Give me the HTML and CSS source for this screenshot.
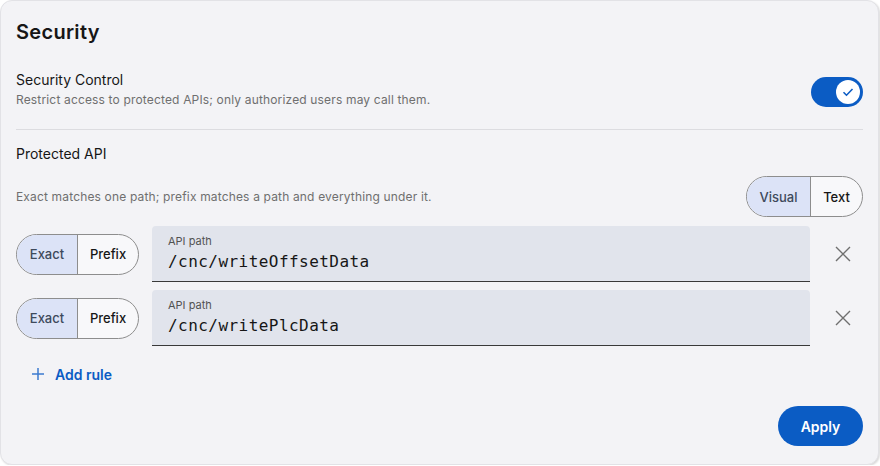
FILE: index.html
```html
<!DOCTYPE html>
<html lang="en">
<head>
    <meta charset="UTF-8">
    <meta name="viewport" content="width=device-width, initial-scale=1.0">
    <title>Security</title>
    <link rel="stylesheet" href="styles.css">
</head>
<body>
    <div class="card">
        <h1 class="title">Security</h1>

        <div class="setting-row">
            <div class="setting-text">
                <div class="label">Security Control</div>
                <div class="hint">Restrict access to protected APIs; only authorized users may call them.</div>
            </div>
            <button class="toggle on" aria-label="Security Control">
                <span class="knob">
                    <svg width="14" height="14" viewBox="0 0 14 14"><path d="M2.5 7.2l3 3 6-6.2" fill="none" stroke="#0b5cc4" stroke-width="1.6"/></svg>
                </span>
            </button>
        </div>

        <hr class="divider">

        <div class="label section-label">Protected API</div>

        <div class="mode-row">
            <div class="hint">Exact matches one path; prefix matches a path and everything under it.</div>
            <div class="segmented">
                <button class="seg active">Visual</button>
                <button class="seg">Text</button>
            </div>
        </div>

        <div class="rules">
            <div class="rule">
                <div class="segmented small">
                    <button class="seg active">Exact</button>
                    <button class="seg">Prefix</button>
                </div>
                <label class="field">
                    <span class="field-label">API path</span>
                    <input class="field-input" type="text" value="/cnc/writeOffsetData">
                </label>
                <button class="remove" aria-label="Remove">
                    <svg width="16" height="16" viewBox="0 0 16 16"><path d="M1 1l14 14M15 1L1 15" stroke="#6f6f6f" stroke-width="1.4"/></svg>
                </button>
            </div>
            <div class="rule">
                <div class="segmented small">
                    <button class="seg active">Exact</button>
                    <button class="seg">Prefix</button>
                </div>
                <label class="field">
                    <span class="field-label">API path</span>
                    <input class="field-input" type="text" value="/cnc/writePlcData">
                </label>
                <button class="remove" aria-label="Remove">
                    <svg width="16" height="16" viewBox="0 0 16 16"><path d="M1 1l14 14M15 1L1 15" stroke="#6f6f6f" stroke-width="1.4"/></svg>
                </button>
            </div>
        </div>

        <button class="add-rule">
            <svg width="12" height="12" viewBox="0 0 12 12"><path d="M6 0v12M0 6h12" stroke="#3d7bd0" stroke-width="1.5"/></svg>
            <span>Add rule</span>
        </button>

        <div class="actions">
            <button class="apply">Apply</button>
        </div>
    </div>
</body>
</html>
```

FILE: styles.css
```css
* {
    box-sizing: border-box;
}

body {
    margin: 0;
    font-family: 'Inter', 'Noto Sans', sans-serif;
    color: #161616;
    background: #ffffff;
}

button {
    font-family: inherit;
    cursor: pointer;
}

.card {
    width: 879px;
    height: 465px;
    background: #f3f3f6;
    border: 1px solid #e2e2e6;
    border-radius: 12px;
    box-shadow: 1px 1px 2px rgba(0, 0, 0, 0.15);
    padding: 17px 15px 0 15px;
    display: flex;
    flex-direction: column;
}

.title {
    margin: 0;
    font-size: 20px;
    line-height: 28px;
    font-weight: 600;
    letter-spacing: 0.3px;
}

.setting-row {
    margin-top: 24px;
    display: flex;
    align-items: center;
    justify-content: space-between;
}

.label {
    font-size: 14px;
    line-height: 20px;
}

.hint {
    font-size: 12px;
    line-height: 16px;
    letter-spacing: 0.16px;
    color: #6f6f6f;
    margin-top: 2px;
}

.toggle {
    width: 52px;
    height: 30px;
    border: none;
    border-radius: 15px;
    background: #0b5cc4;
    padding: 3px;
    margin-top: 5px;
    display: flex;
    justify-content: flex-end;
}

.knob {
    width: 24px;
    height: 24px;
    border-radius: 50%;
    background: #ffffff;
    display: flex;
    align-items: center;
    justify-content: center;
}

.divider {
    border: none;
    border-top: 1px solid #dcdce0;
    margin: 21px 0 0 0;
}

.section-label {
    margin-top: 14px;
}

.mode-row {
    margin-top: 12px;
    display: flex;
    align-items: center;
    justify-content: space-between;
}

.mode-row .hint {
    margin-top: 0;
}

.segmented {
    display: flex;
    height: 41px;
    border: 1px solid #8d8d8d;
    border-radius: 21px;
    overflow: hidden;
    background: #f8f8fa;
}

.seg {
    border: none;
    background: transparent;
    font-size: 13px;
    font-weight: 500;
    color: #161616;
    padding: 0;
}

.seg + .seg {
    border-left: 1px solid #8d8d8d;
}

.seg.active {
    background: #dce3f7;
    color: #3e4a5c;
}

.mode-row .seg:first-child { width: 63px; }
.mode-row .seg:last-child { width: 52px; }

.small .seg:first-child { width: 60px; }
.small .seg:last-child { width: 61px; }

.rules {
    margin-top: 9px;
    display: flex;
    flex-direction: column;
    gap: 8px;
}

.rule {
    display: flex;
    align-items: center;
    gap: 13px;
}

.field {
    flex: 1;
    height: 56px;
    background: #e1e4ec;
    border-bottom: 1px solid #393939;
    border-radius: 4px 4px 0 0;
    padding: 8px 16px 0 16px;
    display: flex;
    flex-direction: column;
}

.field-label {
    font-size: 11px;
    line-height: 14px;
    color: #525252;
}

.field-input {
    border: none;
    background: transparent;
    padding: 0;
    margin-top: 3px;
    font-family: 'DejaVu Sans Mono', 'Liberation Mono', monospace;
    font-size: 16px;
    line-height: 22px;
    letter-spacing: 0.45px;
    color: #161616;
    outline: none;
}

.remove {
    width: 40px;
    height: 40px;
    border: none;
    background: transparent;
    display: flex;
    align-items: center;
    justify-content: center;
    padding: 0;
}

.add-rule {
    align-self: flex-start;
    margin-top: 12px;
    height: 32px;
    padding: 0 16px;
    border: none;
    background: transparent;
    display: flex;
    align-items: center;
    gap: 11px;
    color: #0b5cc4;
    font-size: 14px;
    font-weight: 600;
}

.actions {
    margin-top: 16px;
    display: flex;
    justify-content: flex-end;
}

.apply {
    width: 85px;
    height: 40px;
    border: none;
    border-radius: 20px;
    background: #0b5cc4;
    color: #ffffff;
    font-size: 14px;
    font-weight: 600;
}
```
